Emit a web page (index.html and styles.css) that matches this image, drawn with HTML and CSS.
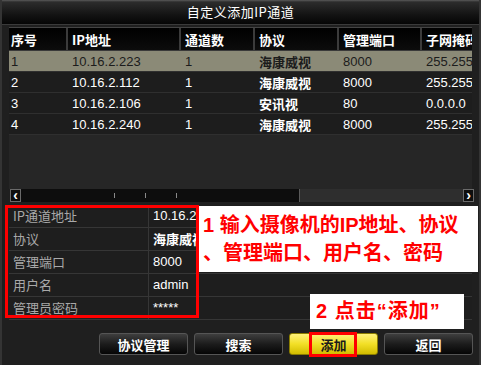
FILE: index.html
```html
<!DOCTYPE html>
<html lang="zh-CN">
<head>
  <meta charset="UTF-8" />
  <title>自定义添加IP通道</title>
  <link rel="stylesheet" href="styles.css">
</head>
<body>
  <div class="window">
    <div class="titlebar">自定义添加IP通道</div>

    <!-- channel list -->
    <div class="grid">
      <div class="grid-row grid-head">
        <span>序号</span><span>IP地址</span><span>通道数</span><span>协议</span><span>管理端口</span><span>子网掩码</span>
      </div>
      <div class="grid-row selected">
        <span>1</span><span>10.16.2.223</span><span>1</span><span class="proto">海康威视</span><span>8000</span><span>255.255.255.0</span>
      </div>
      <div class="grid-row">
        <span>2</span><span>10.16.2.112</span><span>1</span><span class="proto">海康威视</span><span>8000</span><span>255.255.255.0</span>
      </div>
      <div class="grid-row">
        <span>3</span><span>10.16.2.106</span><span>1</span><span class="proto">安讯视</span><span>80</span><span>0.0.0.0</span>
      </div>
      <div class="grid-row">
        <span>4</span><span>10.16.2.240</span><span>1</span><span class="proto">海康威视</span><span>8000</span><span>255.255.255.0</span>
      </div>
    </div>

    <div class="hscroll">
      <span class="arrow">&lsaquo;</span>
      <div class="track">
        <div class="thumb"><i></i><i></i><i></i></div>
      </div>
      <span class="arrow">&rsaquo;</span>
    </div>

    <!-- channel settings -->
    <div class="form">
      <div class="form-row"><span class="label">IP通道地址</span><span class="value">10.16.2.223</span></div>
      <div class="form-row"><span class="label">协议</span><span class="value proto">海康威视</span></div>
      <div class="form-row"><span class="label">管理端口</span><span class="value">8000</span></div>
      <div class="form-row"><span class="label">用户名</span><span class="value">admin</span></div>
      <div class="form-row"><span class="label">管理员密码</span><span class="value">*****</span></div>

      <div class="frame"></div>
      <div class="callout note1">1 输入摄像机的IP地址、协议<br>、管理端口、用户名、密码</div>
    </div>

    <div class="actions">
      <div class="callout note2">2 点击“添加”</div>
      <button>协议管理</button>
      <button>搜索</button>
      <button class="primary">添加<span class="mark"></span></button>
      <button>返回</button>
    </div>
  </div>
</body>
</html>
```

FILE: styles.css
```css
body {
  margin: 0;
  width: 481px;
  height: 365px;
  overflow: hidden;
  background: #1f1f1f;
  font-family: "Liberation Sans", "Noto Sans CJK SC", sans-serif;
  font-size: 13px;
  color: #fff;
}
.window {
  height: 365px;
  box-sizing: border-box;
  border-left: 2px solid #343434;
  border-right: 2px solid #343434;
  background: #1f1f1f;
}
.titlebar {
  height: 24px;
  line-height: 24px;
  text-align: center;
  background: linear-gradient(#5a5a5a 0, #2c2c2c 2px, #141414 60%, #050505);
  border-bottom: 1px solid #3a3a3a;
  font-family: "Noto Sans CJK SC", sans-serif;
  font-size: 13px;
  letter-spacing: 0.5px;
}

/* table */
.grid {
  margin: 2px 0 0 7px;
  width: 463px;
  height: 162px;
  background: #262626;
  overflow: hidden;
  border-top: 1px solid #444;
  box-sizing: border-box;
}
.grid-row {
  display: grid;
  grid-template-columns: 59px 113px 74px 84px 83px 80px;
  height: 21px;
  line-height: 21px;
  background: #1d1d1d;
  border-bottom: 1px solid #2f2f2f;
  box-sizing: border-box;
  white-space: nowrap;
}
.grid-row span {
  padding-left: 4px;
  overflow: hidden;
}
.grid-row span:first-child {
  padding-left: 2px;
}
.grid-head {
  height: 23px;
  line-height: 23px;
  background: linear-gradient(#000, #0c0c0c);
  border-bottom: 1px solid #3a3a3a;
  font-family: "Noto Sans CJK SC", sans-serif;
  font-weight: bold;
}
.grid-head span {
  border-right: 2px solid #3b3b3b;
}
.grid-row.selected {
  background: #8b8a77;
  color: #1c1c1c;
}
.proto {
  font-family: "Noto Sans CJK SC", sans-serif;
  font-weight: bold;
}

/* scrollbar */
.hscroll {
  display: flex;
  margin: 0 0 0 8px;
  width: 464px;
  height: 13px;
  background: #2b2b2b;
}
.arrow {
  width: 11px;
  height: 13px;
  box-sizing: border-box;
  border: 1px solid #6a6a6a;
  background: #0e0e0e;
  font-weight: bold;
  font-size: 14px;
  line-height: 10px;
  text-align: center;
}
.track {
  flex: 1;
  background: #2e2e2e;
}
.thumb {
  position: relative;
  width: 278px;
  height: 13px;
  background: #0d0d0d;
  border-right: 1px solid #5a5a5a;
}
.thumb i {
  position: absolute;
  top: 4px;
  width: 1px;
  height: 5px;
  background: #8a8a8a;
}
.thumb i:nth-child(1) { left: 93px; }
.thumb i:nth-child(2) { left: 124px; }
.thumb i:nth-child(3) { left: 155px; }

/* settings form */
.form {
  position: relative;
  margin: 3px 0 0 7px;
  width: 463px;
}
.form-row {
  display: flex;
  height: 23px;
  line-height: 22px;
  border-bottom: 1px solid #363636;
  box-sizing: border-box;
  background: #1e1e1e;
}
.label {
  width: 140px;
  padding-left: 4px;
  box-sizing: border-box;
  border-right: 1px solid #363636;
  color: #a9a9a9;
  font-family: "Noto Sans CJK SC", sans-serif;
}
.value {
  padding-left: 4px;
  white-space: nowrap;
}
.frame {
  position: absolute;
  left: -4px;
  top: 0;
  width: 194px;
  height: 113px;
  box-sizing: border-box;
  border: 3px solid #ff0000;
}
.callout {
  position: absolute;
  background: #fff;
  color: #ff0000;
  font-family: "Liberation Sans", "Noto Sans CJK SC", sans-serif;
  font-weight: bold;
  font-size: 20px;
  white-space: nowrap;
  box-sizing: border-box;
}
.note1 {
  left: 190px;
  top: 1px;
  width: 279px;
  height: 66px;
  padding: 5px 0 0 4px;
  line-height: 28px;
}
.note2 {
  left: 211px;
  top: -39px;
  width: 154px;
  height: 35px;
  padding-left: 6px;
  line-height: 35px;
  letter-spacing: 1px;
}

/* buttons */
.actions {
  position: relative;
  display: flex;
  gap: 6px;
  margin: 13px 0 0 97px;
}
button {
  position: relative;
  width: 89px;
  height: 22px;
  padding: 0;
  border: 1px solid #555;
  border-radius: 3px;
  background: linear-gradient(#3e3e3e, #1c1c1c 50%, #050505);
  color: #fff;
  font-family: "Noto Sans CJK SC", sans-serif;
  font-weight: bold;
  font-size: 13px;
}
button.primary {
  background: linear-gradient(#fff27a, #f2df26 50%, #d2bc00);
  border-color: #8a7d00;
  color: #1a1a1a;
}
.mark {
  position: absolute;
  left: 19px;
  top: -2px;
  width: 48px;
  height: 25px;
  box-sizing: border-box;
  border: 3px solid #ff0000;
}
```
